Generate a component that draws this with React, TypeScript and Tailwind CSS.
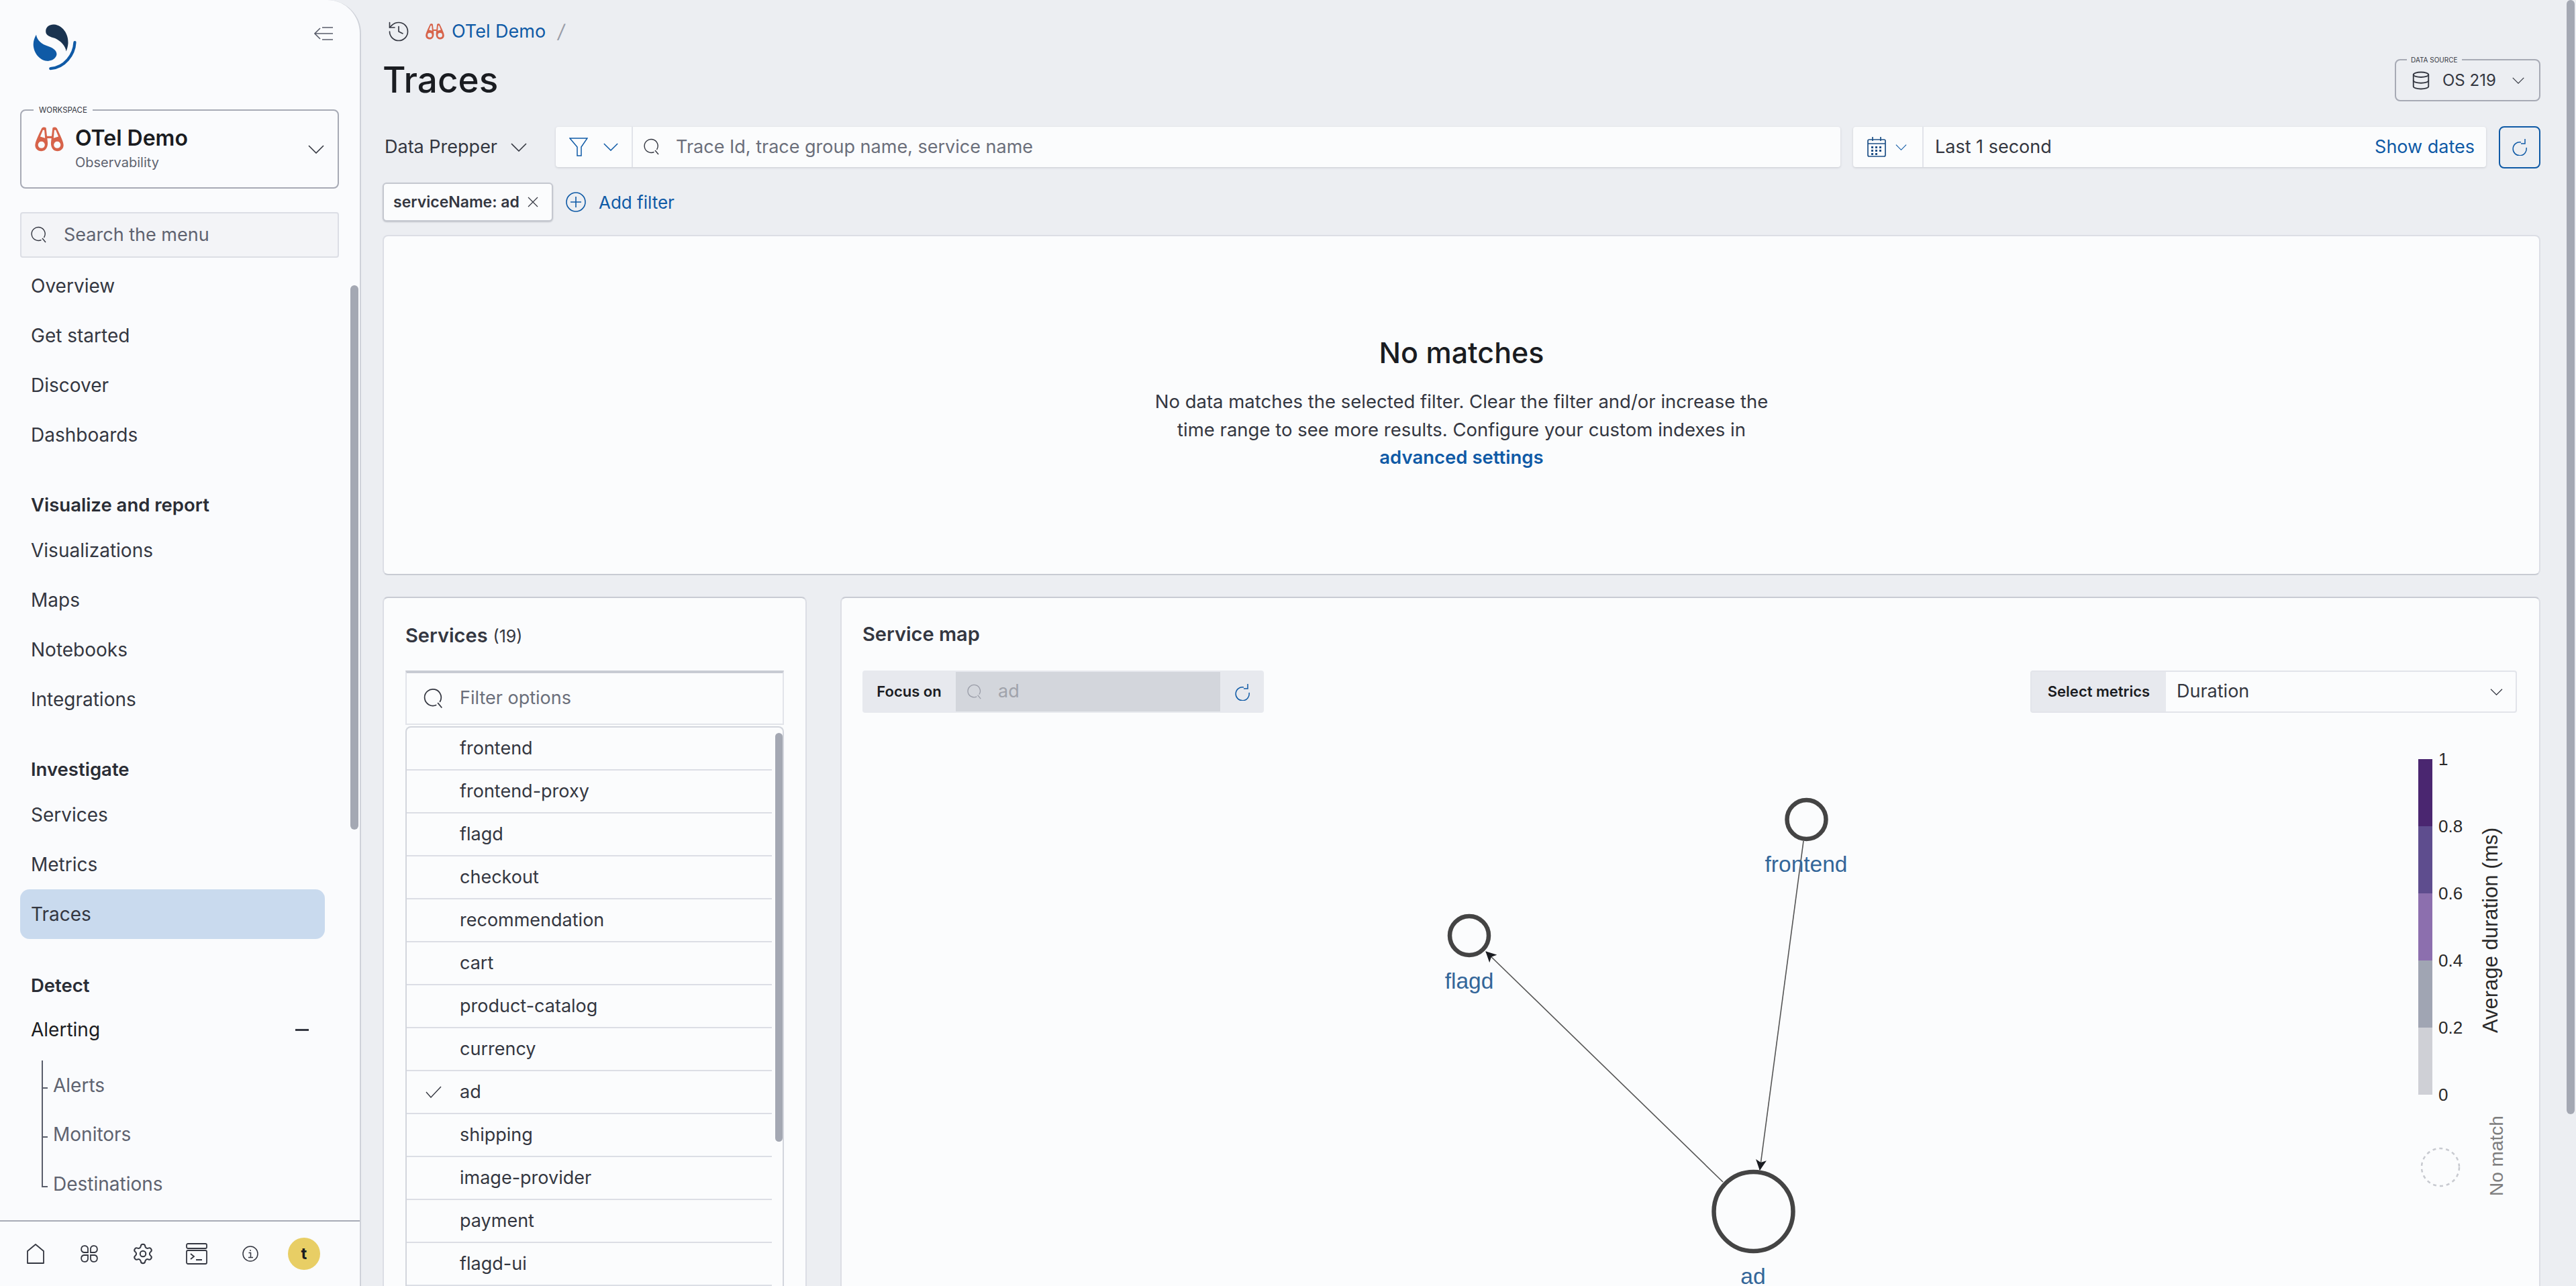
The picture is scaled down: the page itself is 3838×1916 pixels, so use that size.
import { Database, History, Settings } from 'lucide-react'

const NAVY = '#0f5aa6'

function Logo() {
  return (
    <svg viewBox="130 90 190 200" className="h-[71px] w-[68px]">
      <path
        d="M186 125C186 105 205 95 222 97C255 100 282 135 280 175C279 190 275 200 272 210C268 185 250 168 225 155C205 148 186 145 186 125Z"
        fill="#1a3350"
      />
      <path
        d="M146 140C150 165 170 180 195 188C215 195 232 205 232 222C230 240 210 252 190 250C160 247 134 215 134 180C134 165 140 150 146 140Z"
        fill={NAVY}
      />
      <path d="M308 172C305 225 265 278 206 282" fill="none" stroke={NAVY} strokeWidth="12" strokeLinecap="round" />
    </svg>
  )
}

function Binoculars({ className }: { className: string }) {
  const barrel =
    'M28 6C31 1 41 0 46 4L52 58C56 80 46 100 27 100C10 100 0 88 1 74C2 62 8 50 14 36ZM27 60A14 14 0 1 0 27 88A14 14 0 1 0 27 60ZM33 13L22 40L42 46L39 13Z'
  return (
    <svg viewBox="0 0 119 102" className={className}>
      <path d={barrel} fill="#d7634a" fillRule="evenodd" />
      <path d={barrel} fill="#d7634a" fillRule="evenodd" transform="matrix(-1 0 0 1 119 0)" />
      <rect x="48" y="38" width="23" height="9" fill="#d7634a" />
    </svg>
  )
}

function Chevron({ className, color = '#343741' }: { className: string; color?: string }) {
  return (
    <svg viewBox="0 0 24 13" className={className} fill="none" stroke={color} strokeWidth="1.6">
      <path d="M1 1L12 12L23 1" />
    </svg>
  )
}

function SearchIcon({ className, color = '#343741' }: { className: string; color?: string }) {
  return (
    <svg viewBox="0 0 24 26" className={className} fill="none" stroke={color} strokeWidth="1.4">
      <path d="M15.5 20.5A10 10 0 1 1 19.5 17" />
      <path d="M17 18L22 24" />
    </svg>
  )
}

function RefreshIcon({ className, color = NAVY }: { className: string; color?: string }) {
  return (
    <svg viewBox="0 0 24 26" className={className} fill="none" stroke={color} strokeWidth="1.5">
      <path d="M14 6A10 10 0 1 0 22 14" />
      <path d="M20 1V8H14" />
    </svg>
  )
}

function FunnelIcon() {
  return (
    <svg viewBox="0 0 28 28" className="h-[28px] w-[28px]" fill="none" stroke={NAVY} strokeWidth="1.5">
      <path d="M1 1H27L18 14V27L12 27V14Z" />
    </svg>
  )
}

function CalendarIcon() {
  return (
    <svg viewBox="0 0 28 30" className="h-[30px] w-[28px]" fill="none" stroke="#1d4f86" strokeWidth="1.7">
      <rect x="1" y="4" width="26" height="25" rx="2" />
      <path d="M1 10H27M8 0V6M20 0V6" />
      <g fill="#1d4f86" stroke="none">
        <rect x="6" y="14" width="3" height="3" />
        <rect x="12" y="14" width="3" height="3" />
        <rect x="18" y="14" width="3" height="3" />
        <rect x="6" y="19" width="3" height="3" />
        <rect x="12" y="19" width="3" height="3" />
        <rect x="18" y="19" width="3" height="3" />
        <rect x="6" y="24" width="3" height="3" />
        <rect x="12" y="24" width="3" height="3" />
      </g>
    </svg>
  )
}

function CollapseIcon() {
  return (
    <svg viewBox="0 0 28 20" className="h-[20px] w-[28px]" fill="none" stroke="#5a5e6b" strokeWidth="1.6">
      <path d="M9 2L1 10L9 18M1 10H28M12 1H28M12 19H28" />
    </svg>
  )
}

function HomeIcon() {
  return (
    <svg viewBox="0 0 26 30" className="h-[30px] w-[26px]" fill="none" stroke="#343741" strokeWidth="1.8">
      <path d="M1 29V11L13 1L25 11V29Z" strokeLinejoin="round" />
    </svg>
  )
}

function AppsIcon() {
  return (
    <svg viewBox="0 0 28 28" className="h-[28px] w-[28px]" fill="none" stroke="#343741" strokeWidth="1.8">
      <path d="M12 12H6A5 5 0 1 1 12 6ZM16 12H22A5 5 0 1 0 16 6ZM12 16V22A5 5 0 1 1 6 16ZM16 16V22A5 5 0 1 0 22 16Z" />
    </svg>
  )
}

function ConsoleIcon() {
  return (
    <svg viewBox="0 0 32 32" className="h-[32px] w-[32px]" fill="none" stroke="#343741" strokeWidth="1.8">
      <rect x="1" y="1" width="30" height="7" rx="2" />
      <rect x="1" y="11" width="30" height="20" rx="2" />
      <path d="M7 16L12 20L7 24M15 25H24" />
    </svg>
  )
}

function InfoIcon() {
  return (
    <svg viewBox="0 0 24 24" className="h-[24px] w-[24px]" fill="none" stroke="#343741" strokeWidth="1.5">
      <circle cx="12" cy="12" r="11" />
      <path d="M9.5 10.5H12.5V17.5M9 17.5H16" />
      <circle cx="12" cy="7" r="1" fill="#343741" stroke="none" />
    </svg>
  )
}

function NavItem({ label, active }: { label: string; active?: boolean }) {
  return (
    <div
      className={`mx-[30px] flex h-[74px] w-[454px] items-center rounded-[14px] px-[16px] text-[28px] text-[#343741] ${
        active ? 'bg-[#c9daee]' : ''
      }`}
    >
      {label}
    </div>
  )
}

function NavHeading({ label, className }: { label: string; className: string }) {
  return (
    <div className={`flex h-[60px] items-center pl-[46px] text-[27.5px] font-semibold text-[#2a2d35] ${className}`}>
      {label}
    </div>
  )
}

function SubItem({ label }: { label: string }) {
  return (
    <li className="flex h-[73.5px] items-center">
      <span className="mt-[8px] h-[2px] w-[7px] shrink-0 bg-[#5a5e6b]" />
      <span className="ml-[8px] text-[28px] text-[#5f6370]">{label}</span>
    </li>
  )
}

function Sidebar() {
  return (
    <aside className="relative flex h-full w-[538px] shrink-0 flex-col rounded-tr-[50px] border-r-2 border-[#cfd2d9] bg-[#fafbfd]">
      <div className="flex h-[163px] items-start justify-between pl-[48px] pr-[40px] pt-[34px]">
        <Logo />
        <div className="mt-[6px]">
          <CollapseIcon />
        </div>
      </div>

      <div className="relative mx-[30px] flex h-[118px] w-[475px] items-start rounded-[8px] border-2 border-[#a7aab5] pl-[20px] pt-[20px]">
        <span className="absolute left-[18px] top-[-9px] bg-[#fafbfd] px-[8px] text-[11.5px] leading-[16px] text-[#343741]">
          WORKSPACE
        </span>
        <Binoculars className="mt-[4px] h-[37px] w-[43px]" />
        <div className="ml-[17px]">
          <div className="text-[32px] font-semibold leading-[42px] text-[#1a1c21]">OTel Demo</div>
          <div className="mt-[2px] text-[20px] leading-[26px] text-[#5f6370]">Observability</div>
        </div>
        <Chevron className="absolute right-[20px] top-[51px] h-[13px] w-[24px]" />
      </div>

      <div className="mx-[30px] mt-[35px] flex h-[68px] w-[475px] items-center rounded-[4px] border-2 border-[#dcdee5] bg-[#f3f4f7] pl-[14px]">
        <SearchIcon className="h-[26px] w-[24px]" />
        <span className="ml-[25px] text-[27px] text-[#5f6370]">Search the menu</span>
      </div>

      <nav className="min-h-0 flex-1 overflow-hidden pt-[5px]">
        <NavItem label="Overview" />
        <NavItem label="Get started" />
        <NavItem label="Discover" />
        <NavItem label="Dashboards" />
        <NavHeading label="Visualize and report" className="mt-[38px]" />
        <NavItem label="Visualizations" />
        <NavItem label="Maps" />
        <NavItem label="Notebooks" />
        <NavItem label="Integrations" />
        <NavHeading label="Investigate" className="mt-[38px]" />
        <NavItem label="Services" />
        <NavItem label="Metrics" />
        <NavItem label="Traces" active />
        <NavHeading label="Detect" className="mt-[40px]" />
        <div className="flex h-[70px] items-center justify-between pl-[46px] pr-[76px] text-[28px] text-[#1a1c21]">
          <span>Alerting</span>
          <span className="h-[3px] w-[20px] bg-[#343741]" />
        </div>
        <ul className="ml-[62px] mt-[11px] h-[189px] border-l-2 border-[#5a5e6b]">
          <SubItem label="Alerts" />
          <SubItem label="Monitors" />
          <SubItem label="Destinations" />
        </ul>
      </nav>

      <div className="flex h-[98px] shrink-0 items-center border-t-2 border-[#a7aab5] pl-[13px]">
        <div className="flex w-[80px] justify-center">
          <HomeIcon />
        </div>
        <div className="flex w-[80px] justify-center">
          <AppsIcon />
        </div>
        <div className="flex w-[80px] justify-center">
          <Settings size={34} strokeWidth={1.4} color="#343741" />
        </div>
        <div className="flex w-[80px] justify-center">
          <ConsoleIcon />
        </div>
        <div className="flex w-[80px] justify-center">
          <InfoIcon />
        </div>
        <div className="flex w-[80px] justify-center">
          <div className="flex h-[48px] w-[48px] items-center justify-center rounded-full bg-[#e8ce65] text-[24px] font-bold text-[#1a1c21]">
            t
          </div>
        </div>
      </div>

      <div className="absolute left-[522px] top-[425px] h-[811px] w-[12px] rounded-full bg-[#a4a8b3]" />
    </aside>
  )
}

function TopBars() {
  return (
    <>
      <div className="flex h-[42px] items-center pl-[6px] pt-0">
        <History size={36} strokeWidth={1.1} color="#343741" />
        <Binoculars className="ml-[22px] h-[24px] w-[28px]" />
        <span className="ml-[11px] text-[27px] text-[#0f5aa6]">OTel Demo</span>
        <span className="ml-[18px] text-[28px] italic text-[#9a9da8]">/</span>
      </div>

      <div className="mt-[20px] flex h-[63px] items-center justify-between">
        <h1 className="text-[53px] font-medium text-[#1a1c21]">Traces</h1>
        <div className="relative flex h-[63px] w-[217px] items-center rounded-[8px] border-2 border-[#a7aab5] pl-[22px]">
          <span className="absolute left-[16px] top-[-8px] bg-[#eceef2] px-[6px] text-[10px] leading-[14px] text-[#343741]">
            DATA SOURCE
          </span>
          <Database size={30} strokeWidth={1.5} color="#343741" />
          <span className="ml-[17px] text-[24px] text-[#343741]">OS 219</span>
          <Chevron className="ml-[24px] h-[10px] w-[18px]" />
        </div>
      </div>

      <div className="mt-[38px] flex h-[60px] items-center gap-[19px]">
        <div className="flex w-[239px] shrink-0 items-center">
          <span className="ml-[3px] text-[27px] text-[#343741]">Data Prepper</span>
          <Chevron className="ml-[20px] h-[13px] w-[24px]" />
        </div>
        <div className="flex h-full min-w-0 flex-1 items-center rounded-[4px] bg-[#fbfcfd] shadow-[0_1px_3px_rgba(90,94,107,0.25)]">
          <div className="flex h-full w-[115px] shrink-0 items-center border-r-2 border-[#e2e4ea] pl-[20px]">
            <FunnelIcon />
            <Chevron className="ml-[22px] h-[12px] w-[24px]" color={NAVY} />
          </div>
          <SearchIcon className="ml-[16px] h-[26px] w-[24px]" />
          <span className="ml-[24px] text-[27px] text-[#6b6f7b]">Trace Id, trace group name, service name</span>
        </div>
        <div className="flex h-full w-[943px] shrink-0 items-center rounded-[4px] bg-[#fbfcfd] shadow-[0_1px_3px_rgba(90,94,107,0.25)]">
          <div className="flex h-full w-[105px] shrink-0 items-center border-r-2 border-[#e2e4ea] pl-[21px]">
            <CalendarIcon />
            <Chevron className="ml-[14px] h-[9px] w-[17px]" color={NAVY} />
          </div>
          <span className="ml-[17px] text-[27px] text-[#343741]">Last 1 second</span>
          <span className="ml-auto mr-[17px] text-[27px] text-[#0f5aa6]">Show dates</span>
        </div>
        <div className="flex h-[63px] w-[62px] shrink-0 items-center justify-center rounded-[8px] border-2 border-[#0f5aa6]">
          <RefreshIcon className="h-[26px] w-[24px]" />
        </div>
      </div>

      <div className="mt-[23px] flex h-[58px] items-center">
        <div className="flex h-full w-[254px] items-center rounded-[6px] border-2 border-[#c5c8d0] bg-[#fbfcfd] pl-[14px] shadow-[0_1px_2px_rgba(90,94,107,0.3)]">
          <span className="text-[23px] font-semibold text-[#343741]">serviceName: ad</span>
          <svg viewBox="0 0 16 16" className="ml-[12px] h-[16px] w-[16px]" fill="none" stroke="#343741" strokeWidth="1.2">
            <path d="M1 1L15 15M15 1L1 15" />
          </svg>
        </div>
        <svg viewBox="0 0 30 30" className="ml-[19px] h-[30px] w-[30px]" fill="none" stroke={NAVY} strokeWidth="1.6">
          <circle cx="15" cy="15" r="14" />
          <path d="M15 7V23M7 15H23" />
        </svg>
        <span className="ml-[19px] text-[26px] text-[#0f5aa6]">Add filter</span>
      </div>
    </>
  )
}

function NoMatches() {
  return (
    <section className="mt-[20px] flex h-[507px] flex-col items-center rounded-[8px] border-2 border-[#dcdee5] border-b-[#c8cbd3] bg-[#fbfcfd] pt-[145px]">
      <h2 className="text-[43px] font-medium leading-[56px] text-[#1a1c21]">No matches</h2>
      <p className="mt-[25px] w-[1000px] text-center text-[27.5px] leading-[41.5px] text-[#343741]">
        No data matches the selected filter. Clear the filter and/or increase the
        <br />
        time range to see more results. Configure your custom indexes in
        <br />
        <span className="font-semibold text-[#0f5aa6]">advanced settings</span>
      </p>
    </section>
  )
}

const services = [
  'frontend',
  'frontend-proxy',
  'flagd',
  'checkout',
  'recommendation',
  'cart',
  'product-catalog',
  'currency',
  'ad',
  'shipping',
  'image-provider',
  'payment',
  'flagd-ui',
]

function ServicesPanel() {
  return (
    <section className="h-[1100px] w-[632px] shrink-0 rounded-[8px] border-2 border-[#dcdee5] border-t-[#c8cbd3] bg-[#fbfcfd] px-[32px] pt-[34px]">
      <div className="flex h-[40px] items-baseline">
        <span className="text-[29px] font-semibold text-[#343741]">Services</span>
        <span className="ml-[8px] text-[25px] text-[#343741]">(19)</span>
      </div>
      <div className="mt-[34px] flex h-[81px] items-center border-2 border-[#e2e4ea] border-t-[4px] border-t-[#c8cbd3] bg-[#fbfcfd] pl-[24px]">
        <SearchIcon className="h-[32px] w-[32px]" />
        <span className="ml-[23px] text-[27px] text-[#6b6f7b]">Filter options</span>
      </div>
      <div className="relative mt-[2px] rounded-t-[8px] border-x-2 border-t-2 border-[#d3d6dd] pr-[16px]">
        {services.map((name) => (
          <div key={name} className="flex h-[64px] items-center border-b-2 border-[#dcdee5]">
            <div className="flex w-[79px] shrink-0 justify-center pr-[0px]">
              {name === 'ad' && (
                <svg viewBox="0 0 24 18" className="h-[18px] w-[24px]" fill="none" stroke="#343741" strokeWidth="1.4">
                  <path d="M1 9L8 17L23 1" />
                </svg>
              )}
            </div>
            <span className="text-[27px] text-[#343741]">{name}</span>
          </div>
        ))}
        <div className="absolute right-0 top-[8px] h-[609px] w-[11px] rounded-full bg-[#a4a8b3]" />
      </div>
    </section>
  )
}

function ServiceGraph() {
  return (
    <svg
      viewBox="1254 1062 2529 854"
      className="-ml-[31px] block h-[854px] w-[2529px] font-['Liberation_Sans',Arial,sans-serif]"
    >
      <defs>
        <marker id="arrow" viewBox="0 0 16 16" refX="15" refY="8" markerWidth="16" markerHeight="16" orient="auto" markerUnits="userSpaceOnUse">
          <path d="M0 0L16 8L0 16L4 8Z" fill="#1a1c21" />
        </marker>
      </defs>

      <line x1="2687" y1="1253" x2="2622" y2="1743" stroke="#555" strokeWidth="1.6" markerEnd="url(#arrow)" />
      <line x1="2567" y1="1761" x2="2214" y2="1418" stroke="#555" strokeWidth="1.6" markerEnd="url(#arrow)" />

      <circle cx="2189" cy="1394" r="29" fill="none" stroke="#444" strokeWidth="6.5" />
      <circle cx="2691.5" cy="1221" r="29" fill="none" stroke="#444" strokeWidth="6.5" />
      <circle cx="2612.5" cy="1805" r="59" fill="none" stroke="#444" strokeWidth="6.5" />

      <g fill="#336699" fontSize="33.5" textAnchor="middle">
        <text x="2691" y="1299">frontend</text>
        <text x="2189" y="1473">flagd</text>
        <text x="2612" y="1913">ad</text>
      </g>

      <rect x="3603" y="1131" width="21" height="100" fill="#4a2670" />
      <rect x="3603" y="1231" width="21" height="100" fill="#5e4d8e" />
      <rect x="3603" y="1331" width="21" height="100" fill="#8c6fae" />
      <rect x="3603" y="1431" width="21" height="100" fill="#a0a5b3" />
      <rect x="3603" y="1531" width="21" height="100" fill="#cfd0d6" />

      <g fill="#2a2a2a" fontSize="26">
        <text x="3633" y="1140">1</text>
        <text x="3633" y="1240">0.8</text>
        <text x="3633" y="1340">0.6</text>
        <text x="3633" y="1440">0.4</text>
        <text x="3633" y="1540">0.2</text>
        <text x="3633" y="1640">0</text>
      </g>
      <text transform="translate(3721 1539) rotate(-90)" fill="#2a2a2a" fontSize="31">
        Average duration (ms)
      </text>
      <text transform="translate(3729 1782) rotate(-90)" fill="#7d7d7d" fontSize="28">
        No match
      </text>
      <circle cx="3636" cy="1739" r="28" fill="none" stroke="#c8cad0" strokeWidth="2.5" strokeDasharray="5 5" />
    </svg>
  )
}

function ServiceMapPanel() {
  return (
    <section className="h-[1100px] min-w-0 flex-1 rounded-[8px] border-2 border-[#dcdee5] border-t-[#c8cbd3] bg-[#fbfcfd] px-[31px] pt-[34px]">
      <div className="flex h-[40px] items-center text-[29px] font-semibold text-[#343741]">Service map</div>
      <div className="mt-[34px] flex h-[63px] items-stretch justify-between pr-[2px]">
        <div className="flex w-[598px] items-stretch rounded-[4px] bg-[#e7e9ee]">
          <span className="flex w-[139px] shrink-0 items-center justify-center text-[22px] font-semibold text-[#1a1c21]">
            Focus on
          </span>
          <div className="my-[2px] flex w-[394px] items-center bg-[#d3d6dc] pl-[16px]">
            <SearchIcon className="h-[24px] w-[24px]" color="#9a9da8" />
            <span className="ml-[23px] text-[27px] text-[#a0a3ab]">ad</span>
          </div>
          <div className="flex flex-1 items-center justify-center">
            <RefreshIcon className="h-[26px] w-[24px]" />
          </div>
        </div>
        <div className="flex w-[725px] items-stretch rounded-[4px] border-2 border-[#e2e4ea]">
          <span className="flex w-[200px] shrink-0 items-center justify-center bg-[#e7e9ee] text-[22px] font-semibold text-[#1a1c21]">
            Select metrics
          </span>
          <span className="ml-[16px] flex items-center text-[27px] text-[#343741]">Duration</span>
          <Chevron className="my-auto ml-auto mr-[19px] h-[10px] w-[19px]" />
        </div>
      </div>
      <ServiceGraph />
    </section>
  )
}

export default function App() {
  return (
    <div className="flex h-[1916px] w-[3838px] overflow-hidden bg-[#eceef2] font-['Inter',sans-serif]">
      <Sidebar />
      <main className="relative h-full min-w-0 flex-1 overflow-hidden pl-[32px] pr-[53px] pt-[26px]">
        <TopBars />
        <NoMatches />
        <div className="mt-[32px] flex gap-[50px]">
          <ServicesPanel />
          <ServiceMapPanel />
        </div>
        <div className="absolute right-[2px] top-0 h-[1660px] w-[12px] rounded-full bg-[#a4a8b3]" />
      </main>
    </div>
  )
}
